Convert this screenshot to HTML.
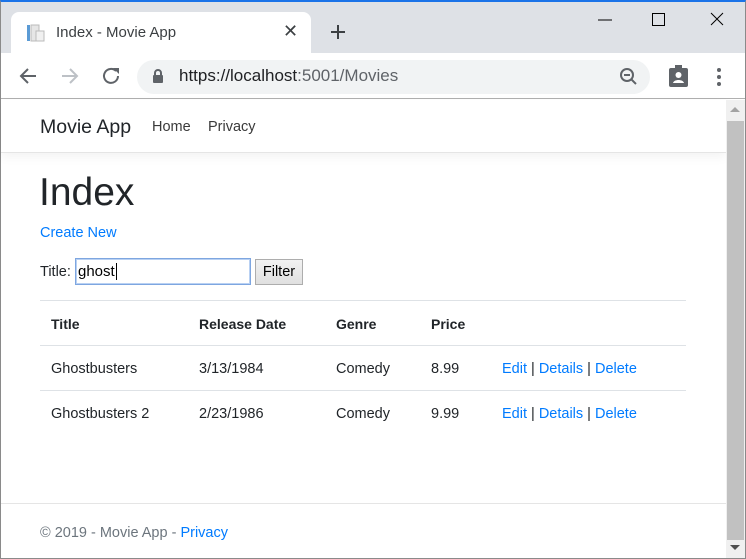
<!DOCTYPE html>
<html><head><style>
*{box-sizing:border-box;margin:0;padding:0}
body{width:746px;height:559px;overflow:hidden;font-family:"Liberation Sans",sans-serif;background:#fff;position:relative;color:#212529}
.abs{position:absolute}
</style></head><body>
<div class="abs" style="left:0;top:0;width:746px;height:559px;border:1px solid #8a8a8a;border-top:2px solid #1a73e8"></div>
<div class="abs" style="left:1px;top:2px;width:744px;height:51px;background:#dee1e6"></div>
<div class="abs" style="left:11px;top:12px;width:300px;height:42px;background:#fff;border-radius:8px 8px 0 0"></div>
<svg class="abs" style="left:26px;top:24px" width="20" height="18"><rect x="1" y="1" width="3" height="16" fill="#5b9bd5"/><rect x="5" y="1" width="8" height="16" fill="#e6e6e6" stroke="#bbb"/><rect x="10" y="7" width="8" height="10" fill="#f0f0f0" stroke="#bbb"/></svg>
<div class="abs" style="left:56px;top:24px;font-size:15px;color:#3c4043">Index - Movie App</div>
<div class="abs" style="left:283px;top:21px;font-size:18px;color:#3c4043">✕</div>
<svg class="abs" style="left:330px;top:24px" width="16" height="16"><path d="M8 1v14M1 8h14" stroke="#3c4043" stroke-width="2"/></svg>
<svg class="abs" style="left:598px;top:12px" width="130" height="16"><path d="M0 8h14" stroke="#000"/><rect x="54.5" y="1.5" width="12" height="12" fill="none" stroke="#000"/><path d="M113 1l12 12M125 1l-12 12" stroke="#000"/></svg>
<div class="abs" style="left:1px;top:53px;width:744px;height:46px;background:#fff;border-bottom:1px solid #b0b0b0"></div>
<svg class="abs" style="left:18px;top:66px" width="110" height="20"><path d="M3 10h15M10 3l-7 7 7 7" fill="none" stroke="#5f6368" stroke-width="2"/><path d="M44 10h15M52 3l7 7-7 7" fill="none" stroke="#bdc1c6" stroke-width="2"/><path d="M98 5a7 7 0 1 0 2 5" fill="none" stroke="#5f6368" stroke-width="2"/><path d="M95 2l6 0 0 6z" fill="#5f6368"/></svg>
<div class="abs" style="left:137px;top:60px;width:513px;height:34px;background:#f1f3f4;border-radius:17px"></div>
<svg class="abs" style="left:152px;top:68px" width="12" height="16"><path d="M3 7V5a3 3 0 0 1 6 0v2" fill="none" stroke="#5f6368" stroke-width="2"/><rect x="1" y="7" width="10" height="8" rx="1" fill="#5f6368"/></svg>
<div class="abs" style="left:179px;top:66px;font-size:17px;color:#202124">https://<span>localhost</span><span style="color:#5f6368">:5001/Movies</span></div>
<svg class="abs" style="left:619px;top:67px" width="20" height="20"><circle cx="8" cy="8" r="6" fill="none" stroke="#5f6368" stroke-width="2"/><path d="M5 8h6M12 12l5 5" stroke="#5f6368" stroke-width="2"/></svg>
<svg class="abs" style="left:668px;top:64px" width="22" height="24"><rect x="1" y="4" width="19" height="19" rx="2" fill="#5f6368"/><rect x="7" y="1" width="7" height="5" fill="#5f6368"/><circle cx="10.5" cy="11" r="3" fill="#fff"/><path d="M5 19c1-4 10-4 11 0z" fill="#fff"/></svg>
<svg class="abs" style="left:716px;top:67px" width="6" height="20"><circle cx="3" cy="3" r="2" fill="#5f6368"/><circle cx="3" cy="10" r="2" fill="#5f6368"/><circle cx="3" cy="17" r="2" fill="#5f6368"/></svg>
<!-- page -->
<div class="abs" style="left:1px;top:100px;width:725px;height:53px;border-bottom:1px solid #e5e5e5;box-shadow:0 4px 10px rgba(0,0,0,.05)"></div>
<div class="abs" style="left:40px;top:116px;font-size:19.5px;color:#212529">Movie App</div>
<div class="abs" style="left:152px;top:119px;font-size:14.5px;color:#3a3a3a">Home</div>
<div class="abs" style="left:208px;top:119px;font-size:14.5px;color:#3a3a3a">Privacy</div>
<div class="abs" style="left:39px;top:171px;font-size:39px;color:#212529">Index</div>
<div class="abs" style="left:40px;top:225px;font-size:14.5px;color:#007bff">Create New</div>
<div class="abs" style="left:40px;top:264px;font-size:14.5px">Title:</div>
<div class="abs" style="left:75px;top:258px;width:176px;height:27px;border:1px solid #7ea6e0;box-shadow:0 0 0 1px #b9d1f3 inset;font-size:15px;padding:4px 2px;color:#000">ghost<span style="border-left:1px solid #000;margin-left:1px"></span></div>
<div class="abs" style="left:255px;top:259px;width:48px;height:26px;border:1px solid #adadad;background:linear-gradient(#f2f2f2,#e0e0e0);font-size:14.5px;text-align:center;line-height:25px;color:#000">Filter</div>
<div class="abs" style="left:40px;top:300px;width:646px;border-top:1px solid #dee2e6"></div>
<div class="abs" style="left:40px;top:345px;width:646px;border-top:1px solid #dee2e6"></div>
<div class="abs" style="left:40px;top:390px;width:646px;border-top:1px solid #dee2e6"></div>
<div class="abs" style="top:316px;left:0;font-size:14px;font-weight:bold;width:746px">
<span class="abs" style="left:51px">Title</span><span class="abs" style="left:199px">Release Date</span><span class="abs" style="left:336px">Genre</span><span class="abs" style="left:431px">Price</span></div>
<div class="abs" style="top:361px;left:0;font-size:14.5px;width:746px">
<span class="abs" style="left:51px">Ghostbusters</span><span class="abs" style="left:199px">3/13/1984</span><span class="abs" style="left:336px">Comedy</span><span class="abs" style="left:431px">8.99</span><span class="abs" style="left:502px;white-space:nowrap"><span style="color:#007bff">Edit</span> | <span style="color:#007bff">Details</span> | <span style="color:#007bff">Delete</span></span></div>
<div class="abs" style="top:406px;left:0;font-size:14.5px;width:746px">
<span class="abs" style="left:51px">Ghostbusters 2</span><span class="abs" style="left:199px">2/23/1986</span><span class="abs" style="left:336px">Comedy</span><span class="abs" style="left:431px">9.99</span><span class="abs" style="left:502px;white-space:nowrap"><span style="color:#007bff">Edit</span> | <span style="color:#007bff">Details</span> | <span style="color:#007bff">Delete</span></span></div>
<div class="abs" style="left:1px;top:503px;width:725px;border-top:1px solid #e5e5e5"></div>
<div class="abs" style="left:40px;top:525px;font-size:14.5px;color:#6c757d">© 2019 - Movie App - <span style="color:#007bff">Privacy</span></div>
<!-- scrollbar -->
<div class="abs" style="left:726px;top:100px;width:19px;height:458px;background:#f0f0f0"></div>
<div class="abs" style="left:727px;top:121px;width:17px;height:419px;background:#c1c1c1"></div>
<svg class="abs" style="left:730px;top:106px" width="11" height="8"><path d="M0 6h10L5 1z" fill="#a3a3a3"/></svg>
<svg class="abs" style="left:730px;top:544px" width="11" height="8"><path d="M0 1h10L5 6z" fill="#505050"/></svg>
</body></html>
